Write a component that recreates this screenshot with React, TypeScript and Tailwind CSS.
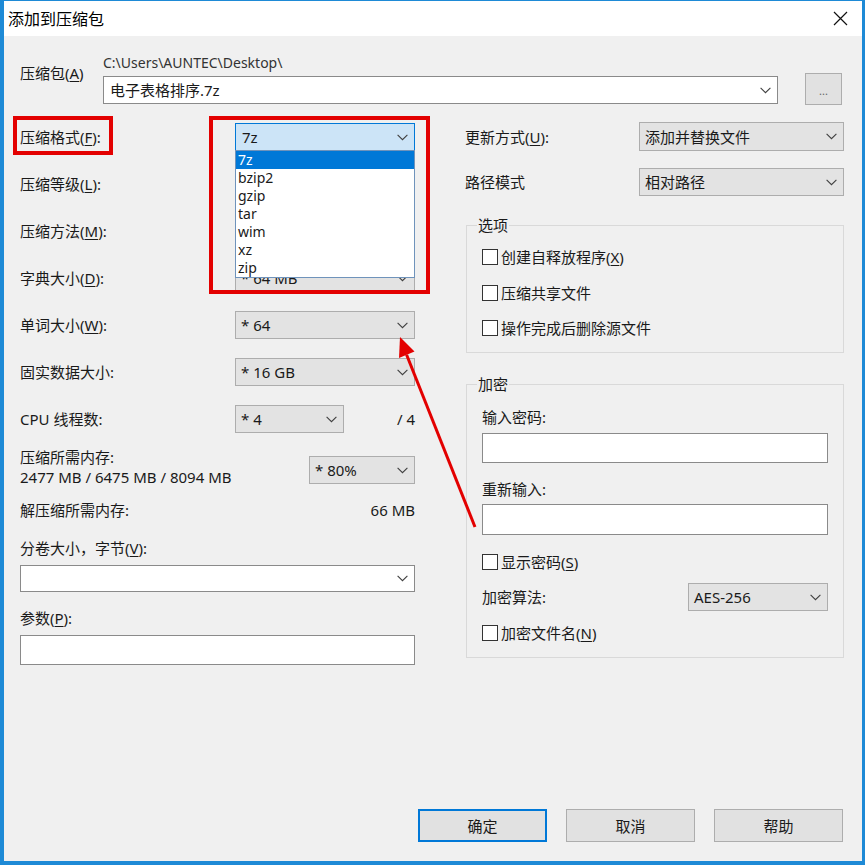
import React from "react";

function Chevron() {
  return (
    <svg width="11" height="7" viewBox="0 0 11 7" className="shrink-0">
      <path d="M0.6 0.8 L5.5 5.7 L10.4 0.8" fill="none" stroke="#404040" strokeWidth="1.1" />
    </svg>
  );
}

function U({ children }: { children: React.ReactNode }) {
  return <span className="underline underline-offset-[2px] decoration-[1px]">{children}</span>;
}

function Combo({ children, className = "" }: { children?: React.ReactNode; className?: string }) {
  return (
    <div className={"flex items-center justify-between border border-[#adadad] bg-[#e3e3e3] pl-[5px] pr-[6px] " + className}>
      <span className="whitespace-nowrap">{children}</span>
      <Chevron />
    </div>
  );
}

function Check({ children, className = "" }: { children: React.ReactNode; className?: string }) {
  return (
    <div className={"flex items-center h-[20px] " + className}>
      <div className="w-[16px] h-[16px] border border-[#333333] bg-white mr-[3px] shrink-0" />
      <span className="whitespace-nowrap">{children}</span>
    </div>
  );
}

function LeftRow({ label, children, className = "" }: { label: React.ReactNode; children: React.ReactNode; className?: string }) {
  return (
    <div className={"flex items-center h-[28px] " + className}>
      <div className="w-[215px] whitespace-nowrap">{label}</div>
      {children}
    </div>
  );
}

export default function App() {
  const formats = ["7z", "bzip2", "gzip", "tar", "wim", "xz", "zip"];
  return (
    <div className="relative w-[865px] h-[865px] flex flex-col border-t border-l-4 border-r-[3px] border-b-4 border-[#1e8ad6] font-['Noto_Sans','Noto_Sans_CJK_SC',sans-serif] text-[15px] leading-[20px] text-[#1a1a1a] overflow-hidden">
      {/* Title bar */}
      <div className="h-[35px] shrink-0 bg-white flex items-center justify-between pl-[4px] pr-[14px]">
        <span className="text-[16px] text-black">添加到压缩包</span>
        <svg width="15" height="15" viewBox="0 0 15 15">
          <path d="M1 1 L14 14 M14 1 L1 14" stroke="#111111" strokeWidth="1.2" fill="none" />
        </svg>
      </div>

      {/* Body */}
      <div className="flex-1 bg-[#f0f0f0] flex flex-col pt-[17px] pb-[19px] pl-[16px]">
        {/* Archive row */}
        <div className="flex items-start h-[52px]">
          <div className="w-[83px] mt-[10px] whitespace-nowrap">
            压缩包(<U>A</U>)
          </div>
          <div className="w-[675px] flex flex-col">
            <div className="h-[20px] text-[14px] text-[#333333]">{"C:\\Users\\AUNTEC\\Desktop\\"}</div>
            <div className="mt-[3px] h-[28px] bg-white border border-[#8a8a8a] flex items-center justify-between pl-[6px] pr-[6px]">
              <span>电子表格排序.7z</span>
              <Chevron />
            </div>
          </div>
          <div className="ml-[27px] mt-[20px] w-[37px] h-[32px] bg-[#e1e1e1] border border-[#adadad] flex items-end justify-center pb-[8px] text-[11px] leading-none text-[#666666]">
            ...
          </div>
        </div>

        {/* Columns */}
        <div className="mt-[17px] flex items-start">
          {/* Left column */}
          <div className="w-[395px] flex flex-col pt-[1px]">
            <LeftRow label={<>压缩格式(<U>F</U>):</>}>
              <div className="relative w-[180px] h-[28px]">
                <div className="h-full border border-[#0078d7] bg-[#cce4f7] flex items-center justify-between pl-[6px] pr-[6px]">
                  <span>7z</span>
                  <Chevron />
                </div>
                <div className="absolute left-0 top-[27px] w-full z-10 bg-white border border-[#6f93bb] flex flex-col text-[14px]">
                  {formats.map((f, i) => (
                    <div
                      key={f}
                      className={i === 0 ? "h-[18px] leading-[18px] pl-[2px] bg-[#0078d7] text-white" : "h-[18px] leading-[18px] pl-[2px] text-[#1a1a1a]"}
                    >
                      {f}
                    </div>
                  ))}
                </div>
              </div>
            </LeftRow>
            <LeftRow className="mt-[19px]" label={<>压缩等级(<U>L</U>):</>}>
              <Combo className="w-[180px] h-[28px]" />
            </LeftRow>
            <LeftRow className="mt-[19px]" label={<>压缩方法(<U>M</U>):</>}>
              <Combo className="w-[180px] h-[28px]" />
            </LeftRow>
            <LeftRow className="mt-[19px]" label={<>字典大小(<U>D</U>):</>}>
              <Combo className="w-[180px] h-[28px]">* 64 MB</Combo>
            </LeftRow>
            <LeftRow className="mt-[19px]" label={<>单词大小(<U>W</U>):</>}>
              <Combo className="w-[180px] h-[28px]">* 64</Combo>
            </LeftRow>
            <LeftRow className="mt-[19px]" label="固实数据大小:">
              <Combo className="w-[180px] h-[28px]">* 16 GB</Combo>
            </LeftRow>
            <LeftRow className="mt-[19px]" label="CPU 线程数:">
              <Combo className="w-[109px] h-[28px]">* 4</Combo>
              <div className="flex-1 text-right">/ 4</div>
            </LeftRow>

            <div className="mt-[14px] flex items-start">
              <div className="flex-1 flex flex-col">
                <div>压缩所需内存:</div>
                <div className="whitespace-nowrap">2477 MB / 6475 MB / 8094 MB</div>
              </div>
              <Combo className="w-[106px] h-[28px] mt-[9px]">* 80%</Combo>
            </div>

            <div className="mt-[13px] flex items-center justify-between">
              <div>解压缩所需内存:</div>
              <div>66 MB</div>
            </div>

            <div className="mt-[18px]">
              分卷大小，字节(<U>V</U>):
            </div>
            <div className="mt-[7px] h-[27px] bg-white border border-[#8a8a8a] flex items-center justify-end pr-[6px]">
              <Chevron />
            </div>

            <div className="mt-[16px]">
              参数(<U>P</U>):
            </div>
            <div className="mt-[7px] h-[30px] bg-white border border-[#8a8a8a]" />
          </div>

          {/* Right column */}
          <div className="ml-[50px] w-[379px] flex flex-col">
            <div className="flex items-center justify-between h-[29px]">
              <div>
                更新方式(<U>U</U>):
              </div>
              <Combo className="w-[205px] h-[29px]">添加并替换文件</Combo>
            </div>
            <div className="mt-[17px] flex items-center justify-between h-[28px]">
              <div>路径模式</div>
              <Combo className="w-[205px] h-[28px]">相对路径</Combo>
            </div>

            <fieldset className="mt-[19px] ml-[1px] border border-[#d9d9d9]">
              <legend className="ml-[10px] px-[1px] leading-[20px]">选项</legend>
              <div className="px-[15px] pt-[12px] pb-[14px] flex flex-col gap-[15.5px]">
                <Check>
                  创建自释放程序(<U>X</U>)
                </Check>
                <Check>压缩共享文件</Check>
                <Check>操作完成后删除源文件</Check>
              </div>
            </fieldset>

            <fieldset className="mt-[21px] ml-[1px] border border-[#d9d9d9]">
              <legend className="ml-[10px] px-[1px] leading-[20px]">加密</legend>
              <div className="px-[15px] pt-[13px] pb-[14px] flex flex-col">
                <div>输入密码:</div>
                <div className="mt-[6px] h-[30px] bg-white border border-[#8a8a8a]" />
                <div className="mt-[16px]">重新输入:</div>
                <div className="mt-[5px] h-[31px] bg-white border border-[#8a8a8a]" />
                <Check className="mt-[17px]">
                  显示密码(<U>S</U>)
                </Check>
                <div className="mt-[11px] flex items-center justify-between h-[28px]">
                  <div>加密算法:</div>
                  <Combo className="w-[140px] h-[28px]">AES-256</Combo>
                </div>
                <Check className="mt-[12px]">
                  加密文件名(<U>N</U>)
                </Check>
              </div>
            </fieldset>
          </div>
        </div>

        <div className="flex-1" />

        {/* Buttons */}
        <div className="flex justify-end gap-[19px] pr-[19px]">
          <div className="w-[129px] h-[33px] bg-[#e1e1e1] border-2 border-[#0078d7] flex items-center justify-center">确定</div>
          <div className="w-[129px] h-[33px] bg-[#e1e1e1] border border-[#adadad] flex items-center justify-center">取消</div>
          <div className="w-[129px] h-[33px] bg-[#e1e1e1] border border-[#adadad] flex items-center justify-center">帮助</div>
        </div>
      </div>

      {/* Annotation overlays */}
      <div className="absolute left-[9px] top-[115px] w-[100px] h-[39px] border-4 border-[#e30000] pointer-events-none" />
      <div className="absolute left-[205px] top-[115px] w-[221px] h-[178px] border-4 border-[#e30000] pointer-events-none z-20" />
      <svg className="absolute left-[-4px] top-[-1px] w-[865px] h-[865px] pointer-events-none z-30" viewBox="0 0 865 865">
        <line x1="475" y1="527" x2="406.6" y2="354.7" stroke="#e30000" strokeWidth="3" />
        <polygon points="400,337 414.5,351.5 399,358" fill="#e30000" />
      </svg>
    </div>
  );
}
